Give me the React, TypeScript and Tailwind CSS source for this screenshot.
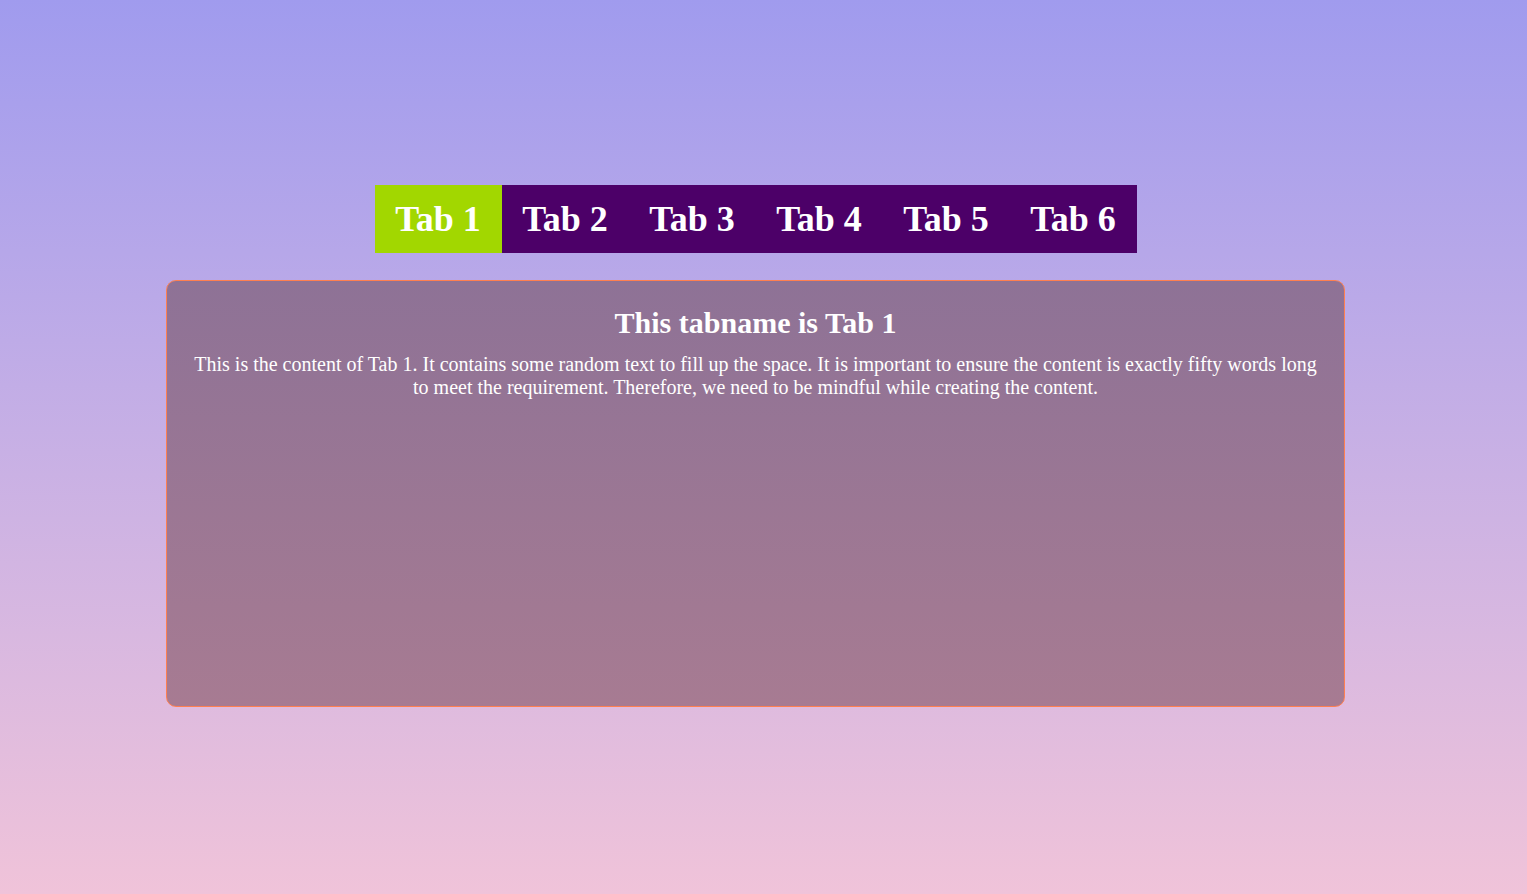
import React, { useState } from "react";

const tabs = ["Tab 1", "Tab 2", "Tab 3", "Tab 4", "Tab 5", "Tab 6"];

export default function App() {
  const [active, setActive] = useState(0);
  return (
    <div
      className="min-h-[894px] w-full bg-gradient-to-b from-[#a09bee] to-[#f0c3d9] flex flex-col items-center pt-[185px] pr-[16px]"
      style={{ fontFamily: '"Liberation Serif", "Times New Roman", serif' }}
    >
      <div className="flex">
        {tabs.map((t, i) => (
          <button
            key={t}
            onClick={() => setActive(i)}
            className={`h-[68px] w-[127px] flex items-center justify-center text-[36px] font-bold text-white ${
              i === active ? "bg-[#a2d700]" : "bg-[#4c0068]"
            }`}
          >
            {t}
          </button>
        ))}
      </div>
      <div className="mt-[27px] w-[1179px] h-[427px] rounded-[10px] border border-[#ff7f50] bg-gradient-to-b from-[#8e7296] to-[#a77b92] px-[24px] pt-[25px] text-center text-white">
        <h2 className="text-[30px] font-bold leading-[34px]">This tabname is {tabs[active]}</h2>
        <p className="mt-[13px] text-[20px] leading-[23px]">
          This is the content of {tabs[active]}. It contains some random text to fill up the space. It is important to ensure the content is exactly fifty words long to meet the requirement. Therefore, we need to be mindful while creating the content.
        </p>
      </div>
    </div>
  );
}
